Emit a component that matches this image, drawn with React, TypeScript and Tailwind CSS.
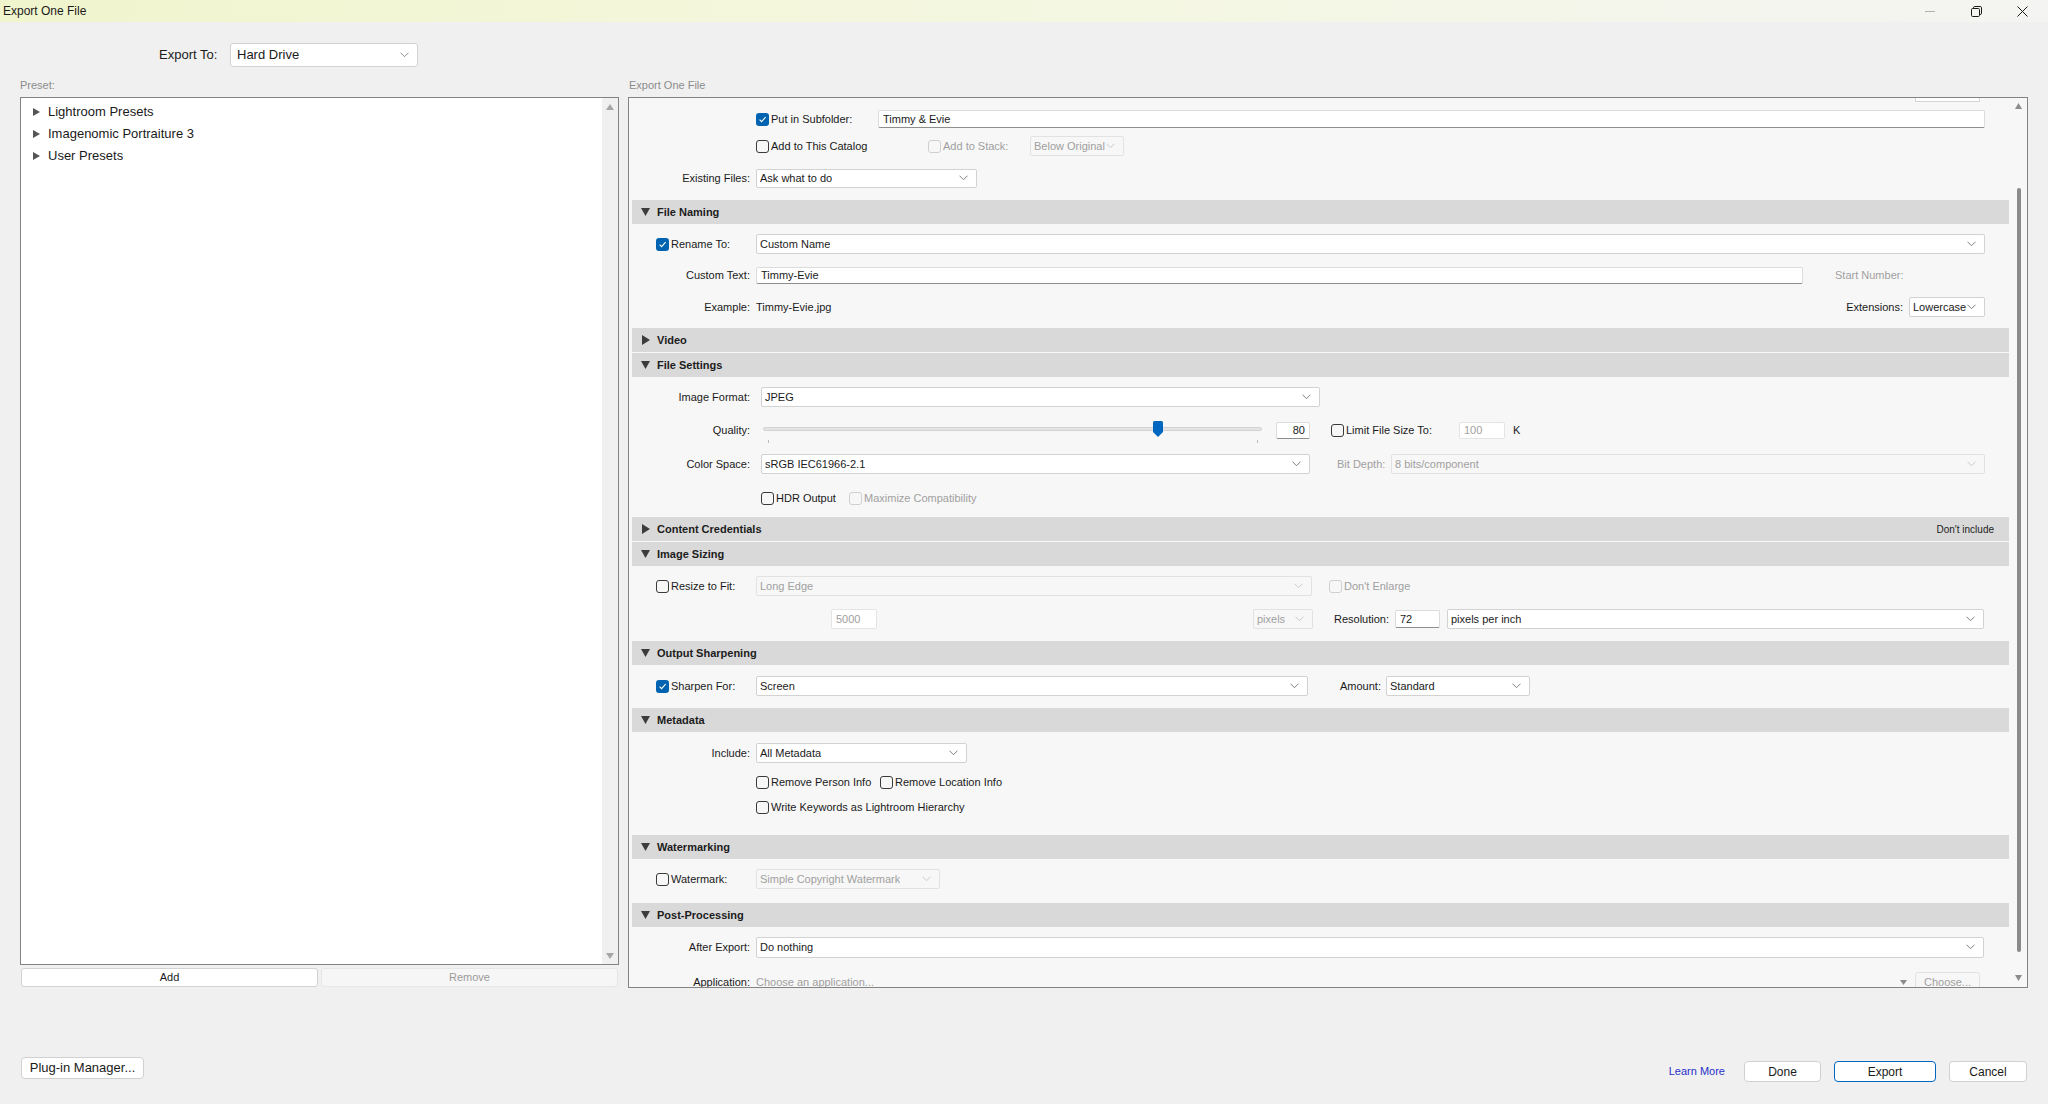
import React from "react";

function Chevron({ color = "#6b6b6b" }: { color?: string }) {
  return (
    <svg width="9" height="6" viewBox="0 0 9 6" className="shrink-0">
      <path d="M0.5 0.7 L4.5 4.7 L8.5 0.7" fill="none" stroke={color} strokeWidth="0.9" />
    </svg>
  );
}

function Dropdown({ text, cls, disabled = false }: { text: string; cls: string; disabled?: boolean }) {
  return (
    <div
      className={`${cls} shrink-0 flex items-center justify-between pl-[3px] pr-[8px] rounded-[2px] border ${
        disabled ? "bg-[#f7f7f7] border-[#e2e2e2] text-[#a0a0a0]" : "bg-white border-[#d2d2d2] text-[#1a1a1a]"
      }`}
    >
      <span className="whitespace-nowrap overflow-hidden">{text}</span>
      <Chevron color={disabled ? "#c4c4c4" : "#707070"} />
    </div>
  );
}

function TextBox({
  text,
  cls,
  disabled = false,
  right = false,
}: {
  text: string;
  cls: string;
  disabled?: boolean;
  right?: boolean;
}) {
  return (
    <div
      className={`${cls} shrink-0 flex items-center px-[4px] rounded-[2px] border bg-white ${right ? "justify-end" : ""} ${
        disabled ? "border-[#e4e4e4] text-[#a0a0a0]" : "border-[#dcdcdc] border-b-[#8e8e8e] text-[#1a1a1a]"
      }`}
    >
      {text}
    </div>
  );
}

function Check({ checked = false, disabled = false }: { checked?: boolean; disabled?: boolean }) {
  if (checked)
    return (
      <div className="w-[13px] h-[13px] shrink-0 rounded-[3px] bg-[#0063b1] flex items-center justify-center">
        <svg width="9" height="9" viewBox="0 0 9 9">
          <path d="M1.6 4.6 L3.6 6.6 L7.6 2.2" fill="none" stroke="#ffffff" strokeWidth="1.1" />
        </svg>
      </div>
    );
  return (
    <div
      className={`w-[13px] h-[13px] shrink-0 rounded-[3px] border ${
        disabled ? "border-[#d0d0d0]" : "border-[#3a3a3a]"
      }`}
    />
  );
}

function CheckLabel({
  label,
  checked = false,
  disabled = false,
  cls = "",
}: {
  label: string;
  checked?: boolean;
  disabled?: boolean;
  cls?: string;
}) {
  return (
    <div className={`flex items-center shrink-0 ${cls}`}>
      <Check checked={checked} disabled={disabled} />
      <span className={`ml-[2px] whitespace-nowrap ${disabled ? "text-[#a0a0a0]" : "text-[#1a1a1a]"}`}>{label}</span>
    </div>
  );
}

function Header({ title, open = true, right }: { title: string; open?: boolean; right?: string }) {
  return (
    <div className="h-[24px] shrink-0 ml-[3px] mr-[1px] bg-[#d9d9d9] flex items-center pl-[9px] pr-[15px]">
      <div className="w-[9px] flex justify-center">
        {open ? (
          <svg width="9" height="8" viewBox="0 0 9 8">
            <path d="M0 0 H9 L4.5 8 Z" fill="#3c3c3c" />
          </svg>
        ) : (
          <svg width="8" height="10" viewBox="0 0 8 10">
            <path d="M0 0 L8 5 L0 10 Z" fill="#3c3c3c" />
          </svg>
        )}
      </div>
      <span className="ml-[7px] font-bold text-[11px] text-[#1c1c1c]">{title}</span>
      {right && <span className="ml-auto text-[10px] text-[#1c1c1c]">{right}</span>}
    </div>
  );
}

function Label({ text }: { text: string }) {
  return (
    <div className="w-[127px] shrink-0 flex justify-end pr-[6px] whitespace-nowrap">
      <span>{text}</span>
    </div>
  );
}

function CheckCol({ label, checked = false }: { label: string; checked?: boolean }) {
  return (
    <div className="w-[127px] shrink-0 pl-[27px] flex items-center">
      <CheckLabel label={label} checked={checked} />
    </div>
  );
}

function TreeItem({ text }: { text: string }) {
  return (
    <div className="h-[22px] flex items-center pl-[12px]">
      <svg width="7" height="8" viewBox="0 0 7 8">
        <path d="M0 0 L7 4 L0 8 Z" fill="#555555" />
      </svg>
      <span className="ml-[8px] text-[13px] text-[#1a1a1a]">{text}</span>
    </div>
  );
}

function Btn({ text, cls, primary = false }: { text: string; cls: string; primary?: boolean }) {
  return (
    <div
      className={`${cls} shrink-0 flex items-center justify-center bg-white rounded-[4px] border ${
        primary ? "border-[#0067c0]" : "border-[#d0d0d0]"
      } text-[#1a1a1a]`}
    >
      {text}
    </div>
  );
}

export default function App() {
  return (
    <div className="w-[2048px] h-[1104px] overflow-hidden bg-[#f0f0f0] font-['Liberation_Sans',Arial,sans-serif] text-[#1a1a1a] flex flex-col">
      {/* Title bar */}
      <div className="h-[22px] shrink-0 flex items-center bg-linear-to-r from-[#f1f5cd] via-[#f4f7e0] to-[#f4f4f2]">
        <span className="pl-[3px] text-[12px] text-[#1a1a1a]">Export One File</span>
        <div className="ml-auto mr-[3px] flex items-center h-full">
          <div className="w-[46px] h-full flex items-center justify-center">
            <svg width="10" height="10" viewBox="0 0 10 10">
              <path d="M0 5.5 H10" stroke="#b0b0b0" strokeWidth="1" />
            </svg>
          </div>
          <div className="w-[46px] h-full flex items-center justify-center">
            <svg width="11" height="11" viewBox="0 0 11 11">
              <rect x="0.5" y="2.5" width="8" height="8" rx="1.2" fill="none" stroke="#1a1a1a" strokeWidth="1" />
              <path d="M2.5 2.5 V1.8 Q2.5 0.5 3.8 0.5 H9.2 Q10.5 0.5 10.5 1.8 V7.2 Q10.5 8.5 9.2 8.5 H8.5" fill="none" stroke="#1a1a1a" strokeWidth="1" />
            </svg>
          </div>
          <div className="w-[46px] h-full flex items-center justify-center">
            <svg width="11" height="11" viewBox="0 0 11 11">
              <path d="M0.5 0.5 L10.5 10.5 M10.5 0.5 L0.5 10.5" stroke="#1a1a1a" strokeWidth="1" />
            </svg>
          </div>
        </div>
      </div>

      {/* Export To row */}
      <div className="mt-[21px] h-[24px] shrink-0 flex items-center pl-[159px]">
        <span className="w-[71px] text-[13px]">Export To:</span>
        <div className="w-[188px] h-[24px] bg-white border border-[#d2d2d2] rounded-[3px] flex items-center justify-between pl-[6px] pr-[8px] text-[13px]">
          <span>Hard Drive</span>
          <Chevron color="#808080" />
        </div>
      </div>

      {/* Panel labels */}
      <div className="mt-[12px] h-[13px] shrink-0 flex text-[11px] leading-[13px] text-[#8c8c8c]">
        <div className="ml-[20px] w-[608px]">Preset:</div>
        <div className="pl-[1px]">Export One File</div>
      </div>

      {/* Panels */}
      <div className="mt-[5px] h-[891px] shrink-0 flex">
        {/* Left column */}
        <div className="ml-[20px] w-[599px] shrink-0 flex flex-col">
          <div className="h-[868px] border border-[#838383] bg-white flex">
            <div className="flex-1 pt-[3px]">
              <TreeItem text="Lightroom Presets" />
              <TreeItem text="Imagenomic Portraiture 3" />
              <TreeItem text="User Presets" />
            </div>
            <div className="w-[16px] bg-[#f0f0f0] flex flex-col items-center justify-between pt-[6px] pb-[5px]">
              <svg width="8" height="6" viewBox="0 0 8 6">
                <path d="M4 0 L8 6 H0 Z" fill="#a6a6a6" />
              </svg>
              <svg width="8" height="6" viewBox="0 0 8 6">
                <path d="M0 0 H8 L4 6 Z" fill="#a6a6a6" />
              </svg>
            </div>
          </div>
          <div className="mt-[3px] h-[19px] flex text-[11px]">
            <div className="ml-[1px] w-[297px] h-[19px] bg-white border border-[#d2d2d2] rounded-[3px] flex items-center justify-center">
              Add
            </div>
            <div className="ml-[3px] w-[297px] h-[19px] bg-[#f6f6f6] border border-[#e6e6e6] rounded-[3px] flex items-center justify-center text-[#9a9a9a]">
              Remove
            </div>
          </div>
        </div>

        {/* Right panel */}
        <div className="ml-[9px] w-[1400px] h-[891px] shrink-0 border border-[#838383] bg-[#f7f7f7] flex">
          <div className="flex-1 overflow-hidden text-[11px] flex flex-col">
            {/* top strip */}
            <div className="h-[8px] shrink-0 flex justify-end">
              <div className="mr-[30px] w-[65px] h-[4px] border-x border-b border-[#d6d6d6] bg-white" />
            </div>
            {/* Subfolder */}
            <div className="h-[26px] shrink-0 flex items-center">
              <div className="w-[127px] shrink-0" />
              <div className="w-[122px] shrink-0">
                <CheckLabel label="Put in Subfolder:" checked />
              </div>
              <TextBox text="Timmy & Evie" cls="w-[1107px] h-[18px]" />
            </div>
            {/* Add to catalog */}
            <div className="h-[28px] shrink-0 flex items-center">
              <div className="w-[127px] shrink-0" />
              <div className="w-[172px] shrink-0">
                <CheckLabel label="Add to This Catalog" />
              </div>
              <div className="w-[102px] shrink-0">
                <CheckLabel label="Add to Stack:" disabled />
              </div>
              <Dropdown text="Below Original" cls="w-[94px] h-[20px]" disabled />
            </div>
            {/* Existing files */}
            <div className="h-[36px] shrink-0 flex items-center">
              <Label text="Existing Files:" />
              <Dropdown text="Ask what to do" cls="w-[221px] h-[19px]" />
            </div>
            <div className="h-[4px] shrink-0" />

            <Header title="File Naming" />
            <div className="h-[40px] shrink-0 flex items-center">
              <CheckCol label="Rename To:" checked />
              <Dropdown text="Custom Name" cls="w-[1229px] h-[20px]" />
            </div>
            <div className="h-[22px] shrink-0 flex items-center">
              <Label text="Custom Text:" />
              <TextBox text="Timmy-Evie" cls="w-[1047px] h-[17px]" />
              <span className="ml-[32px] text-[#a0a0a0]">Start Number:</span>
            </div>
            <div className="h-[42px] shrink-0 flex items-center">
              <Label text="Example:" />
              <span>Timmy-Evie.jpg</span>
              <span className="ml-auto mr-[6px]">Extensions:</span>
              <Dropdown text="Lowercase" cls="w-[76px] h-[20px] mr-[25px]" />
            </div>

            <Header title="Video" open={false} />
            <div className="h-[1px] shrink-0" />
            <Header title="File Settings" />
            <div className="h-[40px] shrink-0 flex items-center">
              <Label text="Image Format:" />
              <div className="w-[5px] shrink-0" />
              <Dropdown text="JPEG" cls="w-[559px] h-[20px]" />
            </div>
            <div className="h-[26px] shrink-0 flex items-center">
              <Label text="Quality:" />
              <div className="w-[5px] shrink-0" />
              <div className="relative w-[501px] h-[26px] shrink-0">
                <div className="absolute left-[2px] right-0 top-[10px] h-[4px] bg-[#e4e4e4] border border-[#d3d3d3] rounded-[2px]" />
                <svg className="absolute left-[392px] top-[4px]" width="10" height="16" viewBox="0 0 10 16">
                  <path d="M1.5 0 H8.5 Q10 0 10 1.5 V11 L5 16 L0 11 V1.5 Q0 0 1.5 0 Z" fill="#0067c0" />
                </svg>
                <div className="absolute left-[7px] top-[23px] w-px h-[3px] bg-[#bdbdbd]" />
                <div className="absolute left-[496px] top-[23px] w-px h-[3px] bg-[#bdbdbd]" />
              </div>
              <TextBox text="80" cls="ml-[14px] w-[34px] h-[17px]" right />
              <div className="ml-[21px] w-[128px] shrink-0">
                <CheckLabel label="Limit File Size To:" />
              </div>
              <TextBox text="100" cls="w-[46px] h-[17px]" disabled />
              <span className="ml-[8px]">K</span>
            </div>
            <div className="h-[42px] shrink-0 flex items-center">
              <Label text="Color Space:" />
              <div className="w-[5px] shrink-0" />
              <Dropdown text="sRGB IEC61966-2.1" cls="w-[549px] h-[20px]" />
              <span className="ml-[27px] w-[54px] shrink-0 text-[#a0a0a0]">Bit Depth:</span>
              <Dropdown text="8 bits/component" cls="w-[594px] h-[20px]" disabled />
            </div>
            <div className="h-[26px] shrink-0 flex items-center">
              <div className="w-[132px] shrink-0" />
              <div className="w-[88px] shrink-0">
                <CheckLabel label="HDR Output" />
              </div>
              <CheckLabel label="Maximize Compatibility" disabled />
            </div>
            <div className="h-[6px] shrink-0" />

            <Header title="Content Credentials" open={false} right="Don't include" />
            <div className="h-[1px] shrink-0" />
            <Header title="Image Sizing" />
            <div className="h-[40px] shrink-0 flex items-center">
              <CheckCol label="Resize to Fit:" />
              <Dropdown text="Long Edge" cls="w-[556px] h-[20px]" disabled />
              <CheckLabel label="Don't Enlarge" disabled cls="ml-[17px]" />
            </div>
            <div className="h-[26px] shrink-0 flex items-center">
              <div className="w-[127px] shrink-0" />
              <TextBox text="5000" cls="ml-[75px] w-[46px] h-[20px]" disabled />
              <Dropdown text="pixels" cls="ml-[376px] w-[60px] h-[20px]" disabled />
              <span className="ml-[21px] w-[61px] shrink-0">Resolution:</span>
              <TextBox text="72" cls="w-[45px] h-[18px]" />
              <Dropdown text="pixels per inch" cls="ml-[7px] w-[537px] h-[20px]" />
            </div>
            <div className="h-[9px] shrink-0" />

            <Header title="Output Sharpening" />
            <div className="h-[42px] shrink-0 flex items-center">
              <CheckCol label="Sharpen For:" checked />
              <Dropdown text="Screen" cls="w-[552px] h-[20px]" />
              <span className="ml-[32px] w-[46px] shrink-0">Amount:</span>
              <Dropdown text="Standard" cls="w-[144px] h-[20px]" />
            </div>
            <div className="h-[1px] shrink-0" />
            <Header title="Metadata" />
            <div className="h-[42px] shrink-0 flex items-center">
              <Label text="Include:" />
              <Dropdown text="All Metadata" cls="w-[211px] h-[20px]" />
            </div>
            <div className="h-[16px] shrink-0 flex items-center">
              <div className="w-[127px] shrink-0" />
              <div className="w-[124px] shrink-0">
                <CheckLabel label="Remove Person Info" />
              </div>
              <CheckLabel label="Remove Location Info" />
            </div>
            <div className="h-[34px] shrink-0 flex items-center">
              <div className="w-[127px] shrink-0" />
              <CheckLabel label="Write Keywords as Lightroom Hierarchy" />
            </div>
            <div className="h-[11px] shrink-0" />

            <Header title="Watermarking" />
            <div className="h-[40px] shrink-0 flex items-center">
              <CheckCol label="Watermark:" />
              <Dropdown text="Simple Copyright Watermark" cls="w-[184px] h-[20px]" disabled />
            </div>
            <div className="h-[4px] shrink-0" />

            <Header title="Post-Processing" />
            <div className="h-[40px] shrink-0 flex items-center">
              <Label text="After Export:" />
              <Dropdown text="Do nothing" cls="w-[1228px] h-[21px]" />
            </div>
            <div className="h-[30px] shrink-0 flex items-center">
              <Label text="Application:" />
              <span className="text-[#a0a0a0]">Choose an application...</span>
              <svg className="ml-auto" width="7" height="5" viewBox="0 0 7 5">
                <path d="M0 0 H7 L3.5 5 Z" fill="#8a8a8a" />
              </svg>
              <div className="ml-[8px] mr-[30px] w-[65px] h-[20px] shrink-0 flex items-center justify-center border border-[#e2e2e2] rounded-[3px] bg-[#f7f7f7] text-[#a0a0a0]">
                Choose...
              </div>
            </div>
          </div>
          {/* scrollbar */}
          <div className="w-[17px] shrink-0 flex flex-col items-center">
            <svg className="mt-[5px]" width="7" height="6" viewBox="0 0 7 6">
              <path d="M3.5 0 L7 6 H0 Z" fill="#8c8c8c" />
            </svg>
            <div className="mt-[79px] w-[4px] h-[764px] rounded-full bg-[#8a8a8a]" />
            <svg className="mt-[23px]" width="7" height="6" viewBox="0 0 7 6">
              <path d="M0 0 H7 L3.5 6 Z" fill="#8c8c8c" />
            </svg>
          </div>
        </div>
      </div>

      {/* Bottom bar */}
      <div className="mt-[69px] h-[25px] shrink-0 flex items-start">
        <Btn text="Plug-in Manager..." cls="ml-[21px] w-[123px] h-[22px] text-[13px]" />
        <div className="ml-auto mr-[21px] mt-[4px] h-[21px] flex items-center">
          <span className="text-[11px] text-[#2a2fc8]">Learn More</span>
          <Btn text="Done" cls="ml-[19px] w-[77px] h-[21px] text-[12px]" />
          <Btn text="Export" cls="ml-[13px] w-[102px] h-[21px] text-[12px]" primary />
          <Btn text="Cancel" cls="ml-[13px] w-[78px] h-[21px] text-[12px]" />
        </div>
      </div>
    </div>
  );
}
